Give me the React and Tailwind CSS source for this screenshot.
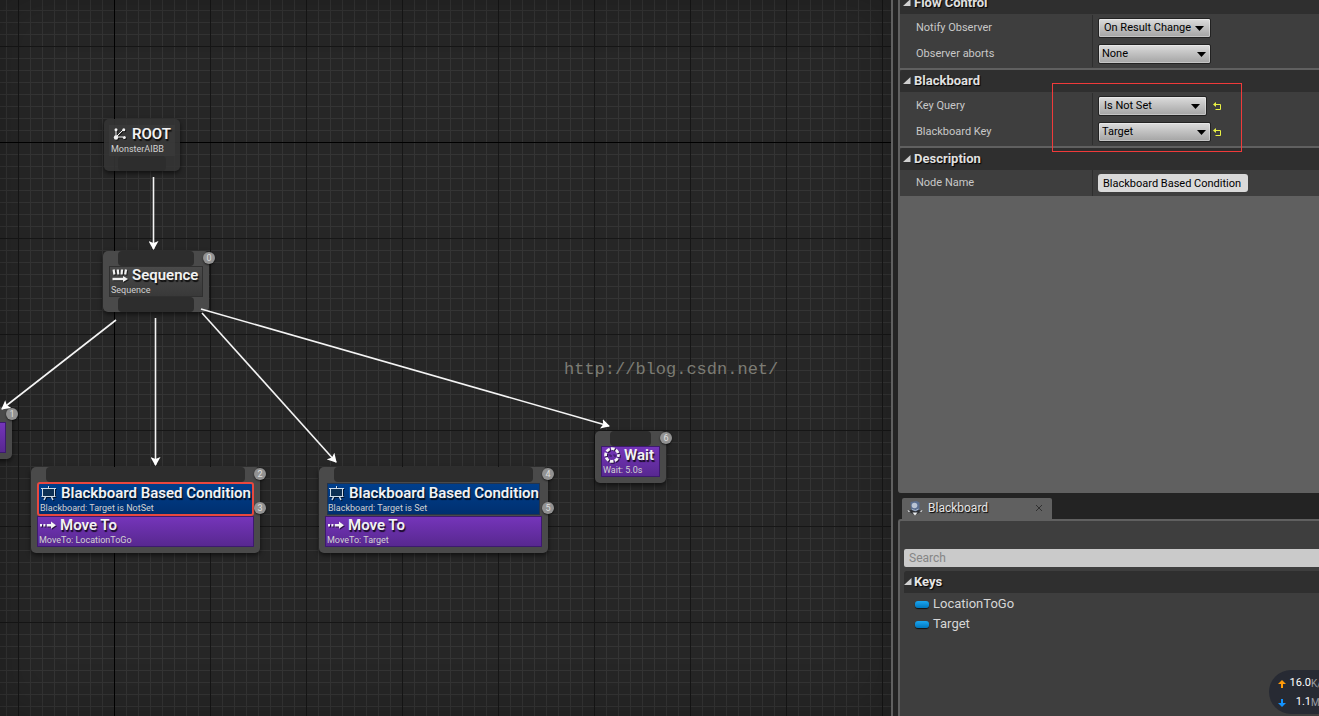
import { useState } from "react";

/* ── Icons ── */
const RootIcon = () => (
    <svg width="14" height="14" viewBox="0 0 14 14" fill="#f0f0f0" stroke="#f0f0f0">
        <path d="M3 3v7h7M3 10l7-7" fill="none" strokeWidth="1" />
        <circle cx="3" cy="10.5" r="2.2" stroke="none" />
        <circle cx="3" cy="2.8" r="1.5" stroke="none" />
        <circle cx="10.8" cy="2.8" r="1.5" stroke="none" />
        <circle cx="11.3" cy="10.5" r="1.5" stroke="none" />
    </svg>
);

const SequenceIcon = () => (
    <svg width="16" height="14" viewBox="0 0 16 14" fill="none" stroke="#f0f0f0">
        <path d="M1.6 1.5l.8 5M5.8 1.500l.5 5M10 1.500l-.4 5M14 1.500l-.8 5" strokeWidth="2.2" />
        <path d="M0.500 11H12" strokeWidth="2.400" />
        <path d="M11 8l5 3-5 3z" fill="#f0f0f0" stroke="none" />
    </svg>
);

const BoardIcon = () => (
    <svg width="16" height="16" viewBox="0 0 16 16" fill="none" stroke="#cfdde9">
        <path d="M1.5 3.5h12v8h-12z" fill="#0d3054" />
        <path d="M7.500 1v2M0 3.500h15M0.500 11.500h14" />
        <path d="M4.500 12l-1.500 3M10.500 12l1.500 3" strokeWidth="1.500" />
    </svg>
);

const MoveIcon = () => (
    <svg width="16" height="10" viewBox="0 0 16 10" fill="#f4f4f4">
        <path d="M0 4h2v2.4H0zM3.4 4h2v2.4h-2zM6.8 4H12v2.4H6.8z" />
        <path d="M11 1.6l5 3.6-5 3.6z" />
    </svg>
);

const WaitIcon = () => (
    <svg width="16" height="16" viewBox="0 0 16 16" fill="none" stroke="#f4f4f4">
        <circle cx="8" cy="8" r="6.4" strokeWidth="2.8" strokeDasharray="3.7 1.326" strokeDashoffset="1.8" />
        <path d="M4.5 8h2.5M9 8h2.5" stroke="#3d1a70" />
    </svg>
);

const CornerArrow = () => (
    <svg width="8" height="8" viewBox="0 0 8 8" className="shrink-0">
        <path d="M7.5 0v7H0z" fill="#d0d0d0" />
    </svg>
);

const ResetIcon = () => (
    <svg width="9" height="9" viewBox="0 0 9 9" fill="none" stroke="#e8f044">
        <path d="M2 2.5h5.5v5H2.5" />
        <path d="M0 2.5L3 0v5z" fill="#e8f044" stroke="none" />
    </svg>
);

const TabIcon = () => (
    <svg width="16" height="16" viewBox="0 0 16 16">
        <path d="M8 8.5L0.5 11 8 15l7.5-4z" fill="#2d2f33" />
        <path d="M0.5 10l3 1.2-2 .8zM15.5 10l-3 1.2 2 .8zM5.5 12.5L8 15.5l2.5-3z" fill="#eef0f2" />
        <path d="M3.5 2l6-1 3 1.5v7l-4 2-4.5-2z" fill="#5b6f91" />
        <circle cx="7.5" cy="5.5" r="2.8" fill="#b9c4d4" />
        <path d="M5 9.5l3.5 1 3-1.5" fill="none" stroke="#a9b7cc" />
    </svg>
);

/* ── Graph ── */
const Badge = ({ className, children }) => (
    <span
        className={`absolute -right-1.5 flex h-3 w-3 items-center justify-center rounded-full
            bg-[#929292] text-[9px] leading-3 text-[#dedede] shadow-[0_1px_2px_rgba(0,0,0,0.6)] ${className}`}>
        {children}
    </span>
);

const Pin = () => <div className="mx-[9px] h-[15px] rounded-[4px] bg-[#2d2d2d]" />;

const Block = ({ icon, title, subtitle, className }) => (
    <div className={`overflow-hidden whitespace-nowrap ${className}`}>
        <div className="flex h-4 items-center gap-1 pl-px">
            <span className="flex w-4 shrink-0 justify-center drop-shadow-[1px_1px_0_rgba(0,0,0,0.6)]">{icon}</span>
            <h3 className="text-[15px] font-semibold leading-4 text-[#f2f2f2] [text-shadow:1px_2px_1px_rgba(0,0,0,0.8)]">
                {title}
            </h3>
        </div>
        <p className="mt-0.5 text-[9px] leading-[10px] text-[#d2d2d2]">{subtitle}</p>
    </div>
);

const nodeClass =
    "absolute rounded-[5px] bg-[#4a4a4a] px-1.5 shadow-[0_2px_5px_rgba(0,0,0,0.6)]";
const purple = "h-[31px] border border-[#3d1a6e] bg-linear-to-b from-[#7535ba] to-[#582890] pl-px";
const blue = "bg-linear-to-b from-[#003f8c] to-[#003070] pt-px";

const Wires = () => (
    <svg className="absolute inset-0 h-full w-full" fill="none" stroke="#f4f4f4" strokeWidth="1.6">
        <defs>
            <marker id="arrow" markerUnits="userSpaceOnUse" markerWidth="10" markerHeight="10"
                refX="8" refY="5" orient="auto">
                <path d="M0 0l9 5-9 5 2-5z" fill="#fff" stroke="none" />
            </marker>
        </defs>
        <path d="M153.5 177V249" markerEnd="url(#arrow)" />
        <path d="M116 320L2 409" markerEnd="url(#arrow)" />
        <path d="M155.5 318V465" markerEnd="url(#arrow)" />
        <path d="M202 313L336 462" markerEnd="url(#arrow)" />
        <path d="M201 309L609 426" markerEnd="url(#arrow)" />
    </svg>
);

const Grid = () => (
    <svg className="absolute inset-0 h-full w-full" shapeRendering="crispEdges">
        <defs>
            <pattern id="minor" x="6" y="10" width="12" height="12" patternUnits="userSpaceOnUse">
                <path d="M0 0h12v1H1v11H0z" fill="#343434" />
            </pattern>
            <pattern id="major" x="18" y="46" width="96" height="96" patternUnits="userSpaceOnUse">
                <path d="M0 0h96v1H1v95H0z" fill="#161616" />
            </pattern>
        </defs>
        <rect width="100%" height="100%" fill="url(#minor)" />
        <rect width="100%" height="100%" fill="url(#major)" />
        <path d="M114 0h1v2000h-1zM0 142h2000v1H0z" fill="#000" />
    </svg>
);

const Graph = () => (
    <main className="relative min-w-0 flex-1 overflow-hidden bg-[#262626]">
        <Grid />
        <div className="absolute inset-0 shadow-[inset_0_0_50px_rgba(0,0,0,0.25)]" />

        <article className="absolute left-[104px] top-[119px] w-[76px] rounded-[5px] bg-[#343434]/90 px-[5px] pt-1.5 shadow-[0_2px_5px_rgba(0,0,0,0.6)]">
            <Block icon={<RootIcon />} title="ROOT" subtitle="MonsterAIBB"
                className="h-[31px] border border-transparent bg-[#3a3a3a]/80 pl-px" />
            <Pin />
        </article>

        <article className={`${nodeClass} left-[103px] top-[251px] w-[106px]`}>
            <Pin />
            <Block icon={<SequenceIcon />} title="Sequence" subtitle="Sequence"
                className="h-[31px] border border-[#303030] bg-linear-to-b from-[#4a4a4a] to-[#393939] pl-px" />
            <Pin />
            <Badge className="top-px">0</Badge>
        </article>

        <article className={`${nodeClass} -left-[58px] top-[407px] w-[70px] pb-1.5`}>
            <Pin />
            <div className={purple} />
            <Badge className="top-px">1</Badge>
        </article>

        <article className={`${nodeClass} left-[31px] top-[467px] w-[229px] pb-1.5`}>
            <Pin />
            <Block icon={<BoardIcon />} title="Blackboard Based Condition" subtitle="Blackboard: Target is NotSet"
                className={`h-[34px] rounded-[3px] border-2 border-[#e8483f] pl-px ${blue}`} />
            <Block icon={<MoveIcon />} title="Move To" subtitle="MoveTo: LocationToGo" className={purple} />
            <Badge className="top-px">2</Badge>
            <Badge className="top-[35px]">3</Badge>
        </article>

        <article className={`${nodeClass} left-[319px] top-[467px] w-[229px] pb-1.5`}>
            <Pin />
            <Block icon={<BoardIcon />} title="Blackboard Based Condition" subtitle="Blackboard: Target is Set"
                className={`mx-0.5 my-px h-8 border border-[#24344c] ${blue}`} />
            <Block icon={<MoveIcon />} title="Move To" subtitle="MoveTo: Target" className={purple} />
            <Badge className="top-px">4</Badge>
            <Badge className="top-[35px]">5</Badge>
        </article>

        <article className={`${nodeClass} left-[595px] top-[431px] w-[71px] pb-1.5`}>
            <Pin />
            <Block icon={<WaitIcon />} title="Wait" subtitle="Wait: 5.0s" className={purple} />
            <Badge className="top-px">6</Badge>
        </article>

        <Wires />
        <p className="absolute left-[564px] top-[359px] font-['Liberation_Mono',monospace] text-[17px] leading-[22px] text-[#7c7c74]">
            http://blog.csdn.net/
        </p>
    </main>
);

/* ── Details panel ── */
const Section = ({ title, children }) => (
    <section className="relative mb-0.5 bg-[#3e3e3e]">
        <h2 className="flex h-[22px] items-center gap-[3px] rounded-tl-[3px] bg-[#2f2f2f] pl-[3px] text-[13px] font-bold text-[#e0e0e0] [text-shadow:1px_1px_1px_#000]">
            <CornerArrow />
            {title}
        </h2>
        {children}
    </section>
);

const Row = ({ id, label, children }) => (
    <div className="flex h-[26px] items-center">
        <label htmlFor={id} className="w-[192px] shrink-0 pl-4 text-[#c8c8c8]">{label}</label>
        <div className="flex h-full flex-1 items-center border-l border-[#2e2e2e] pl-[5px]">
            {children}
        </div>
    </div>
);

const Dropdown = ({ id, value, options, className, arrow = "right-[5px]" }) => {
    const [current, setCurrent] = useState(value);
    return (
        <div className="flex w-[115px]">
            <span className="relative flex">
                <select
                    id={id}
                    value={current}
                    onChange={(e) => setCurrent(e.target.value)}
                    className={`h-[20px] appearance-none overflow-hidden rounded-[2px] border border-[#222]
                        bg-linear-to-b from-[#dcdcdc] to-[#a4a4a4] text-[11px] text-black
                        shadow-[inset_0_0_0_1px_rgba(255,255,255,0.35)] ${className}`}>
                    {options.map((o) => <option key={o}>{o}</option>)}
                </select>
                <svg width="9" height="5" viewBox="0 0 9 5" className={`pointer-events-none absolute top-2 ${arrow}`}>
                    <path d="M0 0h9L4.5 5z" fill="#000" />
                </svg>
            </span>
        </div>
    );
};

const ResetButton = () => (
    <button aria-label="Reset to default" className="cursor-pointer"><ResetIcon /></button>
);

const Details = () => (
    <div className="h-[493px] shrink-0 overflow-hidden rounded-bl-[3px] border-l-2 border-[#606060] bg-[#606060] text-[11px]">
        <div className="-mt-2">
            <Section title="Flow Control">
                <div className="py-px">
                    <Row id="notify" label="Notify Observer">
                        <Dropdown id="notify" value="On Result Change" options={["On Result Change", "On Value Change"]}
                            className="w-[113px] pl-[5px]" arrow="right-[7px]" />
                    </Row>
                    <Row id="aborts" label="Observer aborts">
                        <Dropdown id="aborts" value="None" options={["None", "Self", "Lower Priority", "Both"]}
                            className="w-[113px] pl-[3px]" />
                    </Row>
                </div>
            </Section>
            <Section title="Blackboard">
                <div className="py-px">
                    <Row id="query" label="Key Query">
                        <Dropdown id="query" value="Is Not Set" options={["Is Set", "Is Not Set"]}
                            className="w-[109px] pl-[5px]" arrow="right-[7px]" />
                        <ResetButton />
                    </Row>
                    <Row id="key" label="Blackboard Key">
                        <Dropdown id="key" value="Target" options={["Target", "LocationToGo"]}
                            className="w-[113px] pl-[3px]" />
                        <ResetButton />
                    </Row>
                </div>
                <div className="pointer-events-none absolute left-[152px] top-[13px] z-10 h-[69px] w-[190px] border border-[#f03a3a]" />
            </Section>
            <Section title="Description">
                <Row id="name" label="Node Name">
                    <input id="name" defaultValue="Blackboard Based Condition"
                        className="h-[18px] w-[150px] rounded-[3px] bg-[#dadada] px-[5px] text-black" />
                </Row>
            </Section>
        </div>
    </div>
);

/* ── Blackboard panel ── */
const keys = ["LocationToGo", "Target"];

const Blackboard = () => (
    <div className="flex min-h-0 flex-1 flex-col pt-[5px]">
        <div className="ml-1 flex h-[21px] w-[150px] shrink-0 items-center rounded-t-[2px] bg-[#606060] pb-px pl-[5px] pr-2 text-[12px] text-[#e6e6e6]">
            <TabIcon />
            <span className="ml-[5px] flex-1 [text-shadow:1px_1px_1px_#000]">Blackboard</span>
            <button aria-label="Close tab" className="cursor-pointer p-0.5">
                <svg width="6" height="6" viewBox="0 0 6 6" stroke="#303030"><path d="M0 0l6 6M6 0L0 6" /></svg>
            </button>
        </div>
        <div className="flex-1 rounded-tl-[3px] border-l-2 border-t-2 border-[#606060] bg-[#3e3e3e] pl-1 pt-7">
            <input type="search" placeholder="Search" aria-label="Search"
                className="block h-[18px] w-full rounded-l-[2px] bg-[#cacaca] px-[5px] text-[12px] text-black placeholder:text-[#858585]" />
            <h2 className="mt-1 flex h-[22px] items-center gap-[2px] rounded-tl-[3px] bg-[#2f2f2f] text-[13px] font-bold text-[#e6e6e6] [text-shadow:1px_1px_1px_#000]">
                <CornerArrow />
                Keys
            </h2>
            <ul className="pt-px">
                {keys.map((key) => (
                    <li key={key} className="flex h-5 items-center gap-1 pl-[11px] text-[13px] text-[#d6d6d6]">
                        <span className="h-[7px] w-3.5 rounded-[3px] bg-linear-to-b from-[#1ba6f0] to-[#0076bd] shadow-[0_1px_1px_#111]" />
                        {key}
                    </li>
                ))}
            </ul>
        </div>
    </div>
);

/* ── Network speed widget ── */
const Speed = ({ up, value, unit }) => (
    <div className="flex h-[19px] items-center whitespace-nowrap">
        <svg width="8" height="8" viewBox="0 0 8 8" className={up ? "shrink-0" : "shrink-0 rotate-180"}>
            <path d="M4 0l4 4H5v4H3V4H0z" fill={up ? "#ff9a0a" : "#1493ff"} />
        </svg>
        <span className="w-[25px] shrink-0 text-right text-[11px] text-white">{value}</span>
        <span className="text-[10px] text-[#9a9da3]">{unit}</span>
    </div>
);

const App = () => (
    <div className="relative flex h-screen overflow-hidden bg-[#232323] font-['Roboto',sans-serif]">
        <Graph />
        <aside className="flex w-[428px] shrink-0 flex-col border-l-2 border-[#606060] pl-[5px]">
            <Details />
            <Blackboard />
        </aside>
        <div className="absolute bottom-0.5 right-0 h-11 w-[50px] overflow-hidden rounded-l-[22px] bg-[#272a33] pl-[9px] pt-1">
            <Speed up value="16.0" unit="K/s" />
            <Speed value="1.1" unit="M/s" />
        </div>
    </div>
);

export default App;
